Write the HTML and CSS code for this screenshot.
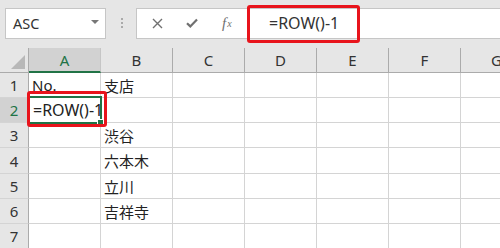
FILE: index.html
```html
<!DOCTYPE html>
<html lang="ja">
<head>
  <meta charset="UTF-8">
  <title>ROW関数</title>
  <link rel="stylesheet" href="styles.css">
</head>
<body>

  <div class="toolbar">
    <div class="namebox">
      <span>ASC</span>
      <span class="caret"></span>
    </div>
    <div class="dots"><i></i><i></i><i></i></div>
    <div class="formulabar">
      <div class="fbtn">
        <svg width="11" height="11" viewBox="0 0 11 11"><path d="M1 1L10 10M10 1L1 10" stroke="#707070" stroke-width="1.4" fill="none"/></svg>
      </div>
      <div class="fbtn">
        <svg width="12" height="10" viewBox="0 0 12 10"><path d="M1 5.2L4.3 8.4L11 1.5" stroke="#707070" stroke-width="2.2" fill="none"/></svg>
      </div>
      <div class="fbtn fx">f<sub>x</sub></div>
      <div class="formula">=ROW()-1</div>
    </div>
    <div class="mark mark-top"></div>
  </div>

  <div class="sheet">
    <div class="corner"><span class="tri"></span></div>
    <div class="colhead sel">A</div>
    <div class="colhead">B</div>
    <div class="colhead">C</div>
    <div class="colhead">D</div>
    <div class="colhead">E</div>
    <div class="colhead">F</div>
    <div class="colhead">G</div>

    <div class="rowhead">1</div>
    <div class="cell">No.</div>
    <div class="cell">支店</div>
    <div class="cell"></div><div class="cell"></div><div class="cell"></div><div class="cell"></div><div class="cell"></div>

    <div class="rowhead sel">2</div>
    <div class="cell active">=ROW()-1<span class="cursor"></span><span class="handle"></span></div>
    <div class="cell"></div>
    <div class="cell"></div><div class="cell"></div><div class="cell"></div><div class="cell"></div><div class="cell"></div>

    <div class="rowhead">3</div>
    <div class="cell"></div>
    <div class="cell">渋谷</div>
    <div class="cell"></div><div class="cell"></div><div class="cell"></div><div class="cell"></div><div class="cell"></div>

    <div class="rowhead tall">4</div>
    <div class="cell tall"></div>
    <div class="cell tall">六本木</div>
    <div class="cell tall"></div><div class="cell tall"></div><div class="cell tall"></div><div class="cell tall"></div><div class="cell tall"></div>

    <div class="rowhead">5</div>
    <div class="cell"></div>
    <div class="cell">立川</div>
    <div class="cell"></div><div class="cell"></div><div class="cell"></div><div class="cell"></div><div class="cell"></div>

    <div class="rowhead">6</div>
    <div class="cell"></div>
    <div class="cell">吉祥寺</div>
    <div class="cell"></div><div class="cell"></div><div class="cell"></div><div class="cell"></div><div class="cell"></div>

    <div class="rowhead">7</div>
    <div class="cell"></div>
    <div class="cell"></div>
    <div class="cell"></div><div class="cell"></div><div class="cell"></div><div class="cell"></div><div class="cell"></div>

    <div class="mark mark-cell"></div>
  </div>

</body>
</html>
```

FILE: styles.css
```css
body {
  margin: 0;
  width: 500px;
  height: 248px;
  overflow: hidden;
  background-color: #e6e6e6;
  font-family: "Noto Sans", "Noto Sans CJK JP", sans-serif;
  color: #222;
}

.toolbar {
  position: relative;
  display: flex;
  align-items: center;
  height: 48px;
  padding-left: 5px;
  box-sizing: border-box;
}

.namebox {
  display: flex;
  align-items: center;
  justify-content: space-between;
  width: 101px;
  height: 31px;
  box-sizing: border-box;
  margin-top: -2px;
  padding: 0 6px 0 7px;
  background-color: white;
  border: 1px solid #c6c6c6;
  font-size: 14.5px;
  color: #333;
}

.caret {
  width: 0;
  height: 0;
  border-left: 4px solid transparent;
  border-right: 4px solid transparent;
  border-top: 4px solid #777;
  margin-top: -2px;
}

.dots {
  display: flex;
  flex-direction: column;
  gap: 2px;
  margin: -2px 13px 0 15px;
}

.dots i {
  display: block;
  width: 2px;
  height: 2px;
  background-color: #aaa;
}

.formulabar {
  display: flex;
  align-items: center;
  flex: 1;
  height: 31px;
  box-sizing: border-box;
  margin-top: -2px;
  margin-right: -10px;
  background-color: white;
  border: 1px solid #c6c6c6;
  padding-left: 15px;
}

.fbtn {
  width: 34px;
  display: flex;
  align-items: center;
  color: #707070;
}

.fx {
  width: 26px;
  font-family: "Liberation Serif", serif;
  font-style: italic;
  font-size: 15px;
  padding-left: 2px;
}

.fx sub {
  font-size: 10px;
  vertical-align: 0;
  margin-left: 1px;
}

.formula {
  padding-left: 21px;
  font-size: 16px;
  color: #333;
}

.sheet {
  position: relative;
  display: grid;
  grid-template-columns: 29px repeat(7, 72px);
  grid-template-rows: 25px repeat(3, 25px) 26px repeat(3, 25px);
  background-color: white;
}

.corner {
  position: relative;
  background-color: #e6e6e6;
  border-right: 1px solid #ababab;
  border-bottom: 1px solid #ababab;
}

.tri {
  position: absolute;
  right: 3px;
  bottom: 3px;
  width: 0;
  height: 0;
  border-left: 14px solid transparent;
  border-bottom: 14px solid #b8b8b8;
}

.colhead {
  display: flex;
  align-items: center;
  justify-content: center;
  background-color: #e6e6e6;
  border-right: 1px solid #ababab;
  border-bottom: 1px solid #ababab;
  font-size: 15px;
  color: #333;
}

.colhead.sel {
  background-color: #d2d2d2;
  color: #217346;
  border-bottom: 2px solid #217346;
  border-right-color: #c6c6c6;
}

.rowhead {
  display: flex;
  align-items: center;
  justify-content: center;
  background-color: #e6e6e6;
  border-right: 1px solid #ababab;
  border-bottom: 1px solid #d4d4d4;
  font-size: 15px;
  color: #333;
}

.rowhead.sel {
  background-color: #d2d2d2;
  color: #217346;
}

.cell {
  position: relative;
  display: flex;
  align-items: center;
  padding-left: 3px;
  border-right: 1px solid #d4d4d4;
  border-bottom: 1px solid #d4d4d4;
  font-size: 15px;
  white-space: nowrap;
  color: #222;
}

.cell.active {
  z-index: 1;
  margin: -2px -1px -1px -2px;
  padding-left: 4px;
  border: 2px solid #217346;
  font-size: 16px;
  overflow: visible;
}

.cursor {
  display: inline-block;
  width: 1px;
  height: 19px;
  background-color: #111;
  margin-left: 1px;
}

.handle {
  position: absolute;
  right: -4px;
  bottom: -4px;
  width: 5px;
  height: 5px;
  background-color: #217346;
  border: 1px solid white;
}

.mark {
  position: absolute;
  border: 3px solid #e8141c;
  border-radius: 3px;
  box-sizing: border-box;
  z-index: 2;
}

.mark-top {
  left: 247px;
  top: 5px;
  width: 113px;
  height: 38px;
}

.mark-cell {
  left: 27px;
  top: 43px;
  width: 80px;
  height: 36px;
}
```
